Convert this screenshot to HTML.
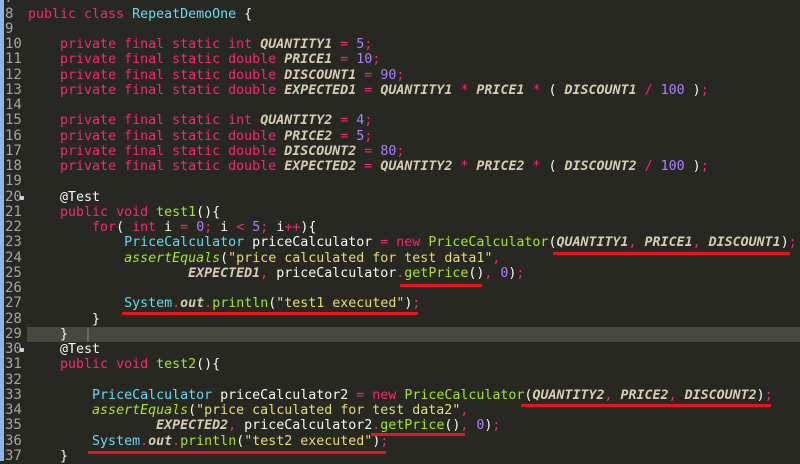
<!DOCTYPE html>
<html><head><meta charset="utf-8"><style>
html,body{margin:0;padding:0;width:800px;height:461px;overflow:hidden;background:#272822;}
.strip{position:absolute;left:0;top:0;width:4px;height:461px;background:#8fb6e8;}
.code{position:absolute;left:0;top:-8.75px;width:800px;font-family:"DejaVu Sans Mono","Liberation Mono",monospace;font-size:13.3px;line-height:15.25px;color:#f8f8f2;}
.l{position:relative;height:15.25px;white-space:pre;}
.n{position:absolute;left:5px;color:#a6a69e;font-size:14px;}
.t{position:absolute;left:28px;}
.hl{background:#48483e;}
.k{color:#f92672}.ty{color:#66d9ef}.f{color:#a6e22e}.s{color:#e6db74}.nu{color:#ae81ff}.c{color:#d6ccb4;font-style:italic;font-weight:bold}.fi{color:#a6e22e;font-style:italic}
.u{position:absolute;height:3px;background:#e8141c;}
.dot{position:absolute;left:20px;width:4px;height:4px;background:#c8d8e8;border-radius:1px;}
</style></head><body>
<div class="strip"></div>
<div class="code">
<div class="l"><span class="n">7</span></div>
<div class="l"><span class="n">8</span><span class="t"><span class="k">public class</span> <span class="ty">RepeatDemoOne</span> {</span></div>
<div class="l"><span class="n">9</span></div>
<div class="l"><span class="n">10</span><span class="t">    <span class="k">private final static int</span> <span class="c">QUANTITY1</span> <span class="k">=</span> <span class="nu">5</span><span class="k">;</span></span></div>
<div class="l"><span class="n">11</span><span class="t">    <span class="k">private final static double</span> <span class="c">PRICE1</span> <span class="k">=</span> <span class="nu">10</span><span class="k">;</span></span></div>
<div class="l"><span class="n">12</span><span class="t">    <span class="k">private final static double</span> <span class="c">DISCOUNT1</span> <span class="k">=</span> <span class="nu">90</span><span class="k">;</span></span></div>
<div class="l"><span class="n">13</span><span class="t">    <span class="k">private final static double</span> <span class="c">EXPECTED1</span> <span class="k">=</span> <span class="c">QUANTITY1</span> <span class="k">*</span> <span class="c">PRICE1</span> <span class="k">*</span> ( <span class="c">DISCOUNT1</span> <span class="k">/</span> <span class="nu">100</span> )<span class="k">;</span></span></div>
<div class="l"><span class="n">14</span></div>
<div class="l"><span class="n">15</span><span class="t">    <span class="k">private final static int</span> <span class="c">QUANTITY2</span> <span class="k">=</span> <span class="nu">4</span><span class="k">;</span></span></div>
<div class="l"><span class="n">16</span><span class="t">    <span class="k">private final static double</span> <span class="c">PRICE2</span> <span class="k">=</span> <span class="nu">5</span><span class="k">;</span></span></div>
<div class="l"><span class="n">17</span><span class="t">    <span class="k">private final static double</span> <span class="c">DISCOUNT2</span> <span class="k">=</span> <span class="nu">80</span><span class="k">;</span></span></div>
<div class="l"><span class="n">18</span><span class="t">    <span class="k">private final static double</span> <span class="c">EXPECTED2</span> <span class="k">=</span> <span class="c">QUANTITY2</span> <span class="k">*</span> <span class="c">PRICE2</span> <span class="k">*</span> ( <span class="c">DISCOUNT2</span> <span class="k">/</span> <span class="nu">100</span> )<span class="k">;</span></span></div>
<div class="l"><span class="n">19</span></div>
<div class="l"><span class="n">20</span><span class="dot" style="top:6px"></span><span class="t">    @Test</span></div>
<div class="l"><span class="n">21</span><span class="t">    <span class="k">public void</span> <span class="f">test1</span>(){</span></div>
<div class="l"><span class="n">22</span><span class="t">        <span class="k">for</span>( <span class="k">int</span> i <span class="k">=</span> <span class="nu">0</span><span class="k">;</span> i <span class="k">&lt;</span> <span class="nu">5</span><span class="k">;</span> i<span class="k">++</span>){</span></div>
<div class="l"><span class="n">23</span><span class="t">            <span class="ty">PriceCalculator</span> priceCalculator <span class="k">=</span> <span class="k">new</span> <span class="f">PriceCalculator</span>(<span class="c">QUANTITY1</span><span class="k">,</span> <span class="c">PRICE1</span><span class="k">,</span> <span class="c">DISCOUNT1</span>)<span class="k">;</span></span></div>
<div class="l"><span class="n">24</span><span class="t">            <span class="fi">assertEquals</span>(<span class="s">"price calculated for test data1"</span><span class="k">,</span></span></div>
<div class="l"><span class="n">25</span><span class="t">                    <span class="c">EXPECTED1</span><span class="k">,</span> priceCalculator<span class="k">.</span><span class="f">getPrice</span>()<span class="k">,</span> <span class="nu">0</span>)<span class="k">;</span></span></div>
<div class="l"><span class="n">26</span></div>
<div class="l"><span class="n">27</span><span class="t">            <span class="ty">System</span><span class="k">.</span><span class="c">out</span><span class="k">.</span><span class="f">println</span>(<span class="s">"test1 executed"</span>)<span class="k">;</span></span></div>
<div class="l"><span class="n">28</span><span class="t">        }</span></div>
<div class="l"><div class="hl" style="position:absolute;left:27px;right:0;top:0;height:15.25px"></div><span class="n">29</span><span class="t">    }  <span style="color:#888">|</span></span></div>
<div class="l"><span class="n">30</span><span class="dot" style="top:6px"></span><span class="t">    @Test</span></div>
<div class="l"><span class="n">31</span><span class="t">    <span class="k">public void</span> <span class="f">test2</span>(){</span></div>
<div class="l"><span class="n">32</span></div>
<div class="l"><span class="n">33</span><span class="t">        <span class="ty">PriceCalculator</span> priceCalculator2 <span class="k">=</span> <span class="k">new</span> <span class="f">PriceCalculator</span>(<span class="c">QUANTITY2</span><span class="k">,</span> <span class="c">PRICE2</span><span class="k">,</span> <span class="c">DISCOUNT2</span>)<span class="k">;</span></span></div>
<div class="l"><span class="n">34</span><span class="t">        <span class="fi">assertEquals</span>(<span class="s">"price calculated for test data2"</span><span class="k">,</span></span></div>
<div class="l"><span class="n">35</span><span class="t">                <span class="c">EXPECTED2</span><span class="k">,</span> priceCalculator2<span class="k">.</span><span class="f">getPrice</span>()<span class="k">,</span> <span class="nu">0</span>)<span class="k">;</span></span></div>
<div class="l"><span class="n">36</span><span class="t">        <span class="ty">System</span><span class="k">.</span><span class="c">out</span><span class="k">.</span><span class="f">println</span>(<span class="s">"test2 executed"</span>)<span class="k">;</span></span></div>
<div class="l"><span class="n">37</span><span class="t">    }</span></div>
</div>
<div class="u" style="left:553px;width:237px;top:252px"></div>
<div class="u" style="left:400px;width:82px;top:284px"></div>
<div class="u" style="left:122px;width:296px;top:312px"></div>
<div class="u" style="left:521px;width:250px;top:404px"></div>
<div class="u" style="left:371px;width:94px;top:433px"></div>
<div class="u" style="left:88px;width:298px;top:451px"></div>
</body></html>
